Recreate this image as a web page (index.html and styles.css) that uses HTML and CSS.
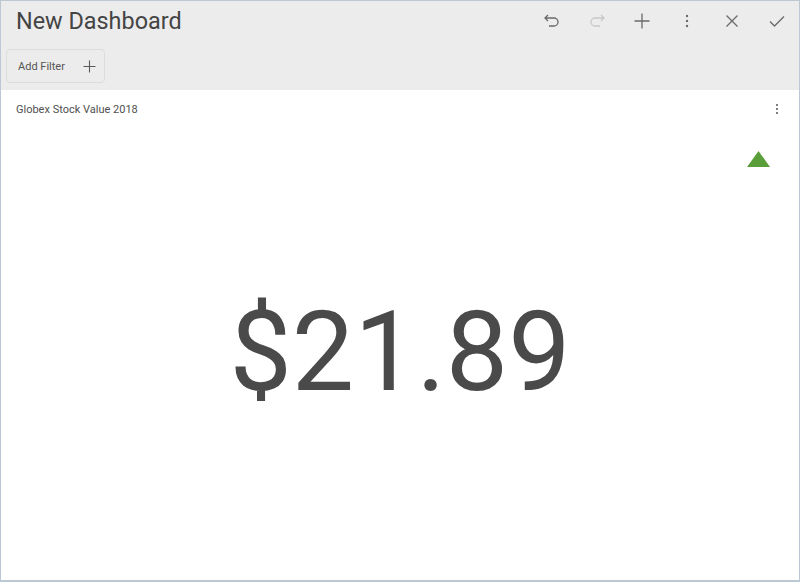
FILE: index.html
```html
<!DOCTYPE html>
<html>
<head>
<meta charset="utf-8">
<link rel="stylesheet" href="styles.css">
</head>
<body>
<div class="frame">
  <header class="header">
    <div class="titlebar">
      <h1 class="title">New Dashboard</h1>
      <div class="tools">
        <span class="tool">
          <svg width="20" height="20" viewBox="0 0 20 20"><path d="M6 4 L3 7 L6 10 M3 7 H12 A4 4 0 0 1 12 15 H7" fill="none" stroke="#6a6a6a" stroke-width="1.3"/></svg>
        </span>
        <span class="tool">
          <svg width="20" height="20" viewBox="0 0 20 20"><path d="M14 4 L17 7 L14 10 M17 7 H8 A4 4 0 0 0 8 15 H13" fill="none" stroke="#c8c8c8" stroke-width="1.3"/></svg>
        </span>
        <span class="tool">
          <svg width="20" height="20" viewBox="0 0 20 20"><path d="M10 2.5 V17.5 M2.5 10 H17.5" fill="none" stroke="#6a6a6a" stroke-width="1.3"/></svg>
        </span>
        <span class="tool">
          <svg width="20" height="20" viewBox="0 0 20 20"><circle cx="10" cy="5" r="1.2" fill="#6a6a6a"/><circle cx="10" cy="10" r="1.2" fill="#6a6a6a"/><circle cx="10" cy="15" r="1.2" fill="#6a6a6a"/></svg>
        </span>
        <span class="tool">
          <svg width="20" height="20" viewBox="0 0 20 20"><path d="M4.5 4.5 L15.5 15.5 M15.5 4.5 L4.5 15.5" fill="none" stroke="#6a6a6a" stroke-width="1.3"/></svg>
        </span>
        <span class="tool">
          <svg width="20" height="20" viewBox="0 0 20 20"><path d="M3 10.5 L7.5 15 L17 5.5" fill="none" stroke="#6a6a6a" stroke-width="1.3"/></svg>
        </span>
      </div>
    </div>
    <div class="filterbar">
      <button class="add-filter">
        <span>Add Filter</span>
        <svg width="13" height="13" viewBox="0 0 13 13"><path d="M6.5 0.5 V12.5 M0.5 6.5 H12.5" fill="none" stroke="#5a5a5a" stroke-width="1.1"/></svg>
      </button>
    </div>
  </header>
  <main class="card">
    <div class="card-head">
      <span class="card-title">Globex Stock Value 2018</span>
      <svg class="kebab" width="6" height="14" viewBox="0 0 6 14"><circle cx="3" cy="3" r="1" fill="#555"/><circle cx="3" cy="7" r="1" fill="#555"/><circle cx="3" cy="11" r="1" fill="#555"/></svg>
    </div>
    <div class="trend">
      <svg width="23" height="16" viewBox="0 0 23 16"><polygon points="11.5,0 23,16 0,16" fill="#5a9e3a"/></svg>
    </div>
    <div class="value-wrap">
      <div class="value">$21.89</div>
    </div>
  </main>
</div>
</body>
</html>
```
FILE: styles.css
```css
* { box-sizing: border-box; }
html, body { margin: 0; padding: 0; }
body {
  width: 800px;
  height: 582px;
  font-family: Roboto, "Liberation Sans", sans-serif;
  overflow: hidden;
}
.frame {
  width: 800px;
  height: 582px;
  border: 1px solid #bcc8d3;
  border-bottom-width: 2px;
  display: flex;
  flex-direction: column;
  background: #fff;
}
.header {
  background: #ececec;
  height: 89px;
  flex: none;
}
.titlebar {
  display: flex;
  align-items: center;
  justify-content: space-between;
  height: 40px;
  padding-left: 15px;
  padding-right: 12px;
}
.title {
  margin: 0;
  font-size: 23.4px;
  font-weight: 400;
  color: #444;
  line-height: 40px;
}
.tools {
  display: flex;
  gap: 25px;
  align-items: center;
}
.tool {
  width: 20px;
  height: 20px;
  display: block;
}
.tool svg { display: block; }
.filterbar {
  padding: 8px 0 0 5px;
}
.add-filter {
  display: flex;
  align-items: center;
  gap: 18px;
  height: 34px;
  width: 99px;
  padding: 0 0 0 11px;
  border: 1px solid #dcdcdc;
  border-radius: 4px;
  background: #ececec;
  font-family: Roboto, "Liberation Sans", sans-serif;
  font-size: 11px;
  color: #555;
  cursor: pointer;
}
.add-filter svg { display: block; }
.card {
  flex: 1;
  display: flex;
  flex-direction: column;
  position: relative;
}
.card-head {
  display: flex;
  justify-content: space-between;
  align-items: center;
  height: 38px;
  padding: 0 19px 0 15px;
}
.card-title {
  font-size: 11px;
  color: #4f4f4f;
}
.kebab { display: block; }
.trend {
  display: flex;
  justify-content: flex-end;
  padding: 23px 29px 0 0;
}
.trend svg { display: block; }
.value-wrap {
  flex: 1;
  display: flex;
  justify-content: center;
  padding-top: 130px;
}
.value {
  font-size: 111px;
  color: #4a4a4a;
  line-height: 1;
  letter-spacing: 0;
}
```
